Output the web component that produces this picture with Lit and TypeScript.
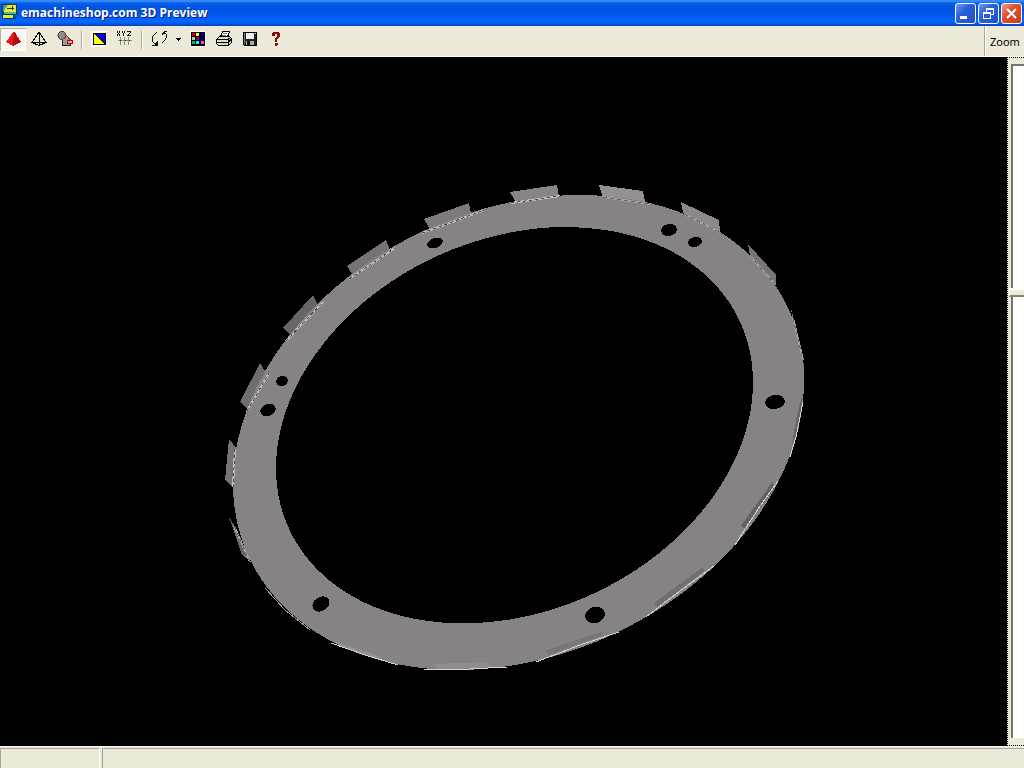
import { LitElement, html, svg, css } from "lit";
import { customElement, state } from "lit/decorators.js";

const px = (rows: string[], colors: Record<string, string>) =>
  svg`${rows.flatMap((row, y) =>
    [...row].map((c, x) =>
      colors[c] ? svg`<rect x=${x} y=${y} width="1" height="1" fill=${colors[c]}></rect>` : null
    )
  )}`;

const icon = (content: unknown) =>
  html`<svg class="icon" viewBox="0 0 16 16" aria-hidden="true">${content}</svg>`;

const icons = {
  solid: icon(svg`
    <path d="M9 0L1 11L8 15L16 11Z" fill="#b80808"/>
    <path d="M9 0L1 11L8 15Z" fill="#e81818"/>`),
  wire: icon(svg`
    <path d="M8 1L1 11.5L8 14.5L15 11.5Z M8 1V14.500 M1 11.5H15" fill="none" stroke="#000"/>`),
  parts: icon(svg`
    <circle cx="5" cy="4.500" r="4" fill="#8c8c8c" stroke="#444"/>
    <path d="M5.500 8.500H13.500V14.500H5.500Z" fill="#999" stroke="#222"/>
    <path d="M5 9L9.500 4.500L13 8.500" fill="#999" stroke="#555"/>
    <path d="M5 9L9.500 5.500" stroke="#d02020"/>
    <rect x="10.500" y="9.500" width="5" height="3" fill="#f0a0a0" stroke="#c00"/>`),
  contrast: icon(svg`
    <rect width="16" height="16" fill="#fff"/><rect x="2" y="2" width="13" height="12" fill="#000"/>
    <path d="M3 3V13H14Z" fill="#ffff20"/><path d="M4 3H14V13Z" fill="#0000d8"/>`),
  xyz: icon(px([
    "x.x..x.x..xxxx", "x.x..x.x.....x", ".x....x.....x.", "x.x...x....x..", "x.x...x...xxxx", "",
    "...g...g...g..", "...g...g...g..", "...g...g...g..", ".ggkggggkgggkgg", "...g...g...g..",
    "...g...g...g..", "...g...g...g..", "...g...g...g..",
  ], { x: "#111", g: "#8c8c84", k: "#222" })),
  rotate: icon(px([
    ".............xxx", ".....x......xx..", "....x......xxxx.", "...x.......x...x", "..x............x",
    ".x.............x", ".x.............x", ".x............x.", ".x............x.", ".x...........x..",
    ".x....x.....x...", "..x..xx....x....", "...xxxx.........", "....xxx.........", ".xxxxxx.........",
  ].map((r) => r.slice(0, 16)), { x: "#111" })),
  palette: icon(svg`
    <rect width="16" height="16" fill="#fff"/><rect x="1" y="1" width="14" height="14" fill="#000"/>
    ${["#d00000", "#ffff00", "#0000d0", "#c0c0c0", "#800080", "#000060", "#00c040", "#00ffff", "#ff30ff"].map(
      (c, i) => svg`<rect x=${2 + (i % 3) * 4 + (i % 3 > 1 ? 1 : 0)} y=${2 + Math.floor(i / 3) * 4} width="3" height="3" fill=${c}></rect>`
    )}`),
  print: icon(svg`
    <path d="M4.500 6L6.500 .5H13.500L11.500 6" fill="#fff" stroke="#000"/>
    <path d="M7 2.500H11 M6 4.500H10" stroke="#777"/>
    <path d="M3.500 5.500H13.500L15.500 7.500V11.500L12.500 14.500H2.500L.5 12.500V8.500Z" fill="#ddd9c8" stroke="#000"/>
    <path d="M1 8.500H12L15 6 M1 11.500H12L15 8.500 M12.500 9V14" fill="none" stroke="#000"/>
    <rect x="7" y="12" width="3" height="1" fill="#e0d020"/>`),
  save: icon(svg`
    <path d="M1.500 1.500H14.500V14.500H2.500L1.500 13.500Z" fill="#222" stroke="#000"/>
    <rect x="4" y="2" width="8" height="6" fill="#eee"/><rect x="2" y="2" width="1" height="11" fill="#777"/>
    <rect x="4" y="10" width="8" height="4" fill="#aaa"/><rect x="5" y="10" width="3" height="4" fill="#111"/>
    <rect x="13" y="2" width="1" height="1" fill="#fff"/>`),
  help: icon(px([
    "", ".....rrrrrr", "....rrrrrrrr", "....rrr..rrr", "....rrr..rrr", ".........rrr", "........rrr",
    ".......rrr", ".......rr", ".......rr", ".......rr", "", ".......rrr", ".......rrr", ".......rr",
  ], { r: "#850c0c" })),
};

const tabs: [string, string][] = [
  ["347,266 386,240 390,250 352,274", "#777276"],
  ["283,328 313,295 318,305 290,335", "#686568"],
  ["260,363 267,374 247,409 240,402", "#706d70"],
  ["229,439 237,449 233,488 225,480", "#777477"],
  ["229,517 237,530 250,561 242,555", "#686568"],
  ["424,219 469,203 471,213 430,229", "#7e7a7d"],
  ["510,192 557,185 559,197 516,202", "#8b8487"],
  ["599,185 643,191 645,202 603,197", "#968f93"],
  ["681,202 719,220 720,232 683,213", "#8e888c"],
  ["748,244 776,275 776,286 750,256", "#777377"],
  ["791,308 803,355 804,370 793,325", "#777377"],
];

const folds: [string, string][] = [
  ["803,392 799,428 792,444 797,415", "#696669"],
  ["773,481 774,489 744,529 741,526", "#656265"],
  ["703,567 704,571 657,607 654,603", "#716d71"],
  ["603,631 603,635 548,655 545,651", "#797578"],
  ["432,664 489,662 490,667 438,670", "#928b8f"],
  ["333,641 381,657 380,660 345,648", "#979094"],
];

const edges = [
  "803,402 796,437 790,457", "778,481 758,509 735,545", "714,566 680,591 646,617",
  "619,632 580,645 536,662", "507,667 470,669 424,669", "398,665 365,655 331,643",
];

const seams = [
  "349,279 395,248", "286,341 323,302", "247,411 269,373", "235,449 233,487",
  "422,233 482,211", "511,203 560,196",
];

const faintSeams = [
  "234,526 250,562", "603,197 650,204", "684,214 719,232", "750,256 775,284", "793,318 803,360",
];

const holes = [
  [435, 243, 8, 5, -20], [669, 230, 8, 6, -12], [695, 242, 7, 5, -12], [775, 402, 10, 7, -8],
  [595, 615, 10, 8, -15], [321, 604, 9, 7, -30], [268, 410, 8, 6, -25], [282, 381, 6, 5, -20],
];

@customElement("app-root")
export class AppRoot extends LitElement {
  static styles = css`
    :host {
      display: flex;
      flex-direction: column;
      height: 100vh;
      overflow: hidden;
      background: #ece9d8;
      color: #000;
      font: 11px/14px "Noto Sans", sans-serif;
    }
    svg { display: block; }
    button { margin: 0; padding: 0; border: 0; background: none; font: inherit; }
    .titlebar {
      flex: none;
      display: flex;
      align-items: center;
      height: 26px;
      padding: 0 2px;
      background: linear-gradient(#2b7ff5 0, #3a93ff 1px, #0a61e8 3px, #0054e0 7px, #0056e5 14px, #0566fc 20px, #0560f2 23px, #0040ba 26px);
    }
    .logo { width: 16px; height: 16px; margin: 0 3px 2px 0; }
    .title {
      flex: 1;
      margin: 0;
      color: #fff;
      font: bold 12px/18px "Open Sans", sans-serif;
      text-shadow: 1px 1px #0a1883;
      white-space: nowrap;
    }
    .controls { display: flex; gap: 2px; }
    .control {
      width: 21px;
      height: 21px;
      border: 1px solid #fff;
      border-radius: 3px;
      background: linear-gradient(135deg, #6f9cf5, #2a5fdc 40%, #2050c8);
    }
    .close { background: linear-gradient(135deg, #f0a080, #e05030 40%, #c83c18); }
    .toolbar {
      flex: none;
      display: flex;
      justify-content: space-between;
      box-sizing: border-box;
      height: 31px;
      border-bottom: 1px solid #fff;
    }
    .tools { display: flex; padding-top: 2px; height: 23px; }
    .tool { display: grid; place-items: center; width: 26px; height: 23px; }
    .pressed { background: #f8f6f0; box-shadow: inset 1px 1px #b4b1a4, inset -1px -1px #fff; }
    .drop { width: 13px; }
    .drop svg { width: 5px; height: 3px; }
    .icon { width: 16px; height: 16px; margin-bottom: 2px; shape-rendering: crispEdges; }
    .sep { width: 0; height: 18px; margin: 3px 3px 0; border-left: 1px solid #aca899; border-right: 1px solid #fff; }
    .zoomlabel {
      display: flex;
      align-items: center;
      padding: 2px 5px 0;
      width: 29px;
      border-left: 1px solid #aca899;
      box-shadow: inset 1px 0 #fff;
    }
    .main { flex: 1; min-height: 0; display: flex; background: #000; }
    .view { flex: 1; min-width: 0; }
    .view svg { width: 100%; height: 100%; }
    .zoom {
      flex: none;
      display: flex;
      width: 17px;
      box-sizing: border-box;
      padding: 6px 0 6px 1px;
      border: 1px dotted #000;
      border-right: 0;
      background: #ece9d8;
    }
    .slider {
      appearance: none;
      writing-mode: vertical-lr;
      width: 100%;
      height: 100%;
      margin: 0;
      outline: none;
      background:
        linear-gradient(#fff, #fff) 4px 2px / 100% calc(100% - 3px) no-repeat,
        linear-gradient(#77756a, #77756a) 2px 0 / 100% calc(100% - 1px) no-repeat;
    }
    .slider::-webkit-slider-thumb {
      appearance: none;
      box-sizing: border-box;
      width: 15px;
      height: 9px;
      background: #ece9d8;
      border: solid;
      border-width: 2px 0 2px 1px;
      border-color: #fff #fff #85826f #fff;
    }
    .status { flex: none; display: flex; gap: 2px; height: 20px; padding-top: 2px; box-shadow: inset 0 1px #f5f3ea; }
    .cell { border-top: 1px solid #aca899; border-left: 1px solid #aca899; }
    .cell:first-child { width: 98px; border-right: 1px solid #fff; }
    .cell:last-child { flex: 1; }
  `;

  @state() private zoom = 337;

  render() {
    return html`
      <header class="titlebar">
        <svg class="logo" viewBox="0 0 16 16" shape-rendering="crispEdges">
          <path d="M0 0H14V8H0Z" fill="#e9e92a" /><path d="M0 0H6L1 9H0Z" fill="#28a8a0" />
          <path d="M0 8H16V11H12V13H14V15H2V12H0Z" fill="#083c50" />
          <path d="M2 8H14V10H2Z" fill="#40c0a8" /><path d="M1 11H11V14H1Z" fill="#e9e92a" />
          <path d="M5 4.500H12 M10.500 2V6 M0 .5H14.500V8 M.5 0V15" stroke="#234" fill="none" />
        </svg>
        <h1 class="title">emachineshop.com 3D Preview</h1>
        <div class="controls">
          <button class="control" aria-label="Minimize">
            <svg viewBox="0 0 19 19"><path d="M4 12H11V15H4Z" fill="#fff" /></svg>
          </button>
          <button class="control" aria-label="Restore">
            <svg viewBox="0 0 19 19" shape-rendering="crispEdges" fill="none" stroke="#fff">
              <path d="M7.500 8V4.500H14.500V10.500H12 M7 5.500H15 M4.500 8.500H11.500V14.500H4.500Z M4 9.500H12" />
            </svg>
          </button>
          <button class="control close" aria-label="Close">
            <svg viewBox="0 0 19 19"><path d="M5 5L14 14M14 5L5 14" stroke="#fff" stroke-width="2" /></svg>
          </button>
        </div>
      </header>
      <div class="toolbar">
        <div class="tools" role="toolbar">
          <button class="tool pressed" aria-label="Solid">${icons.solid}</button>
          <button class="tool" aria-label="Wireframe">${icons.wire}</button>
          <button class="tool" aria-label="Parts">${icons.parts}</button>
          <span class="sep"></span>
          <button class="tool" aria-label="Background">${icons.contrast}</button>
          <button class="tool" aria-label="Axes">${icons.xyz}</button>
          <span class="sep"></span>
          <button class="tool" aria-label="Rotate">${icons.rotate}</button>
          <button class="tool drop" aria-label="Rotate options">
            <svg viewBox="0 0 5 3" shape-rendering="crispEdges"><path d="M0 0H5V1H4V2H3V3H2V2H1V1H0Z" /></svg>
          </button>
          <button class="tool" aria-label="Colors">${icons.palette}</button>
          <button class="tool" aria-label="Print">${icons.print}</button>
          <button class="tool" aria-label="Save">${icons.save}</button>
          <button class="tool" aria-label="Help">${icons.help}</button>
        </div>
        <label class="zoomlabel" for="zoom">Zoom</label>
      </div>
      <main class="main">
        <div class="view">
          <svg viewBox="0 57 1007 689" shape-rendering="crispEdges" role="img" aria-label="Ring part">
            ${tabs.map(([p, c]) => svg`<polygon points=${p} fill=${c}></polygon>`)}
            <circle r="1" transform="matrix(285.5 -51.2 0 231.9 518.5 432.5)" fill="#878283" />
            ${folds.map(([p, c]) => svg`<polygon points=${p} fill=${c}></polygon>`)}
            ${edges.map((p) => svg`<polyline points=${p} fill="none" stroke="#d4d2d2"></polyline>`)}
            <polyline points="265,588 285,610 310,630" fill="none" stroke="#a19b9e" />
            ${seams.map((p) => svg`
              <polyline points=${p} stroke="#bdb9bb" stroke-width="2"></polyline>
              <polyline points=${p} stroke="#4c494b" stroke-dasharray="3 3"></polyline>`)}
            ${faintSeams.map((p) => svg`
              <polyline points=${p} stroke="#a5a0a2" stroke-width="2"></polyline>
              <polyline points=${p} stroke="#6a6668" stroke-dasharray="4 3"></polyline>`)}
            <circle r="1" transform="matrix(238.5 -42.8 0 193.5 514.5 425.2)" fill="#000" />
            ${holes.map(([x, y, rx, ry, a]) =>
              svg`<ellipse rx=${rx} ry=${ry} transform="translate(${x} ${y}) rotate(${a})" fill="#000"></ellipse>`)}
          </svg>
        </div>
        <div class="zoom">
          <input id="zoom" class="slider" type="range" min="0" max="1000" .value=${String(this.zoom)}
            @input=${(e: Event) => (this.zoom = Number((e.target as HTMLInputElement).value))} />
        </div>
      </main>
      <footer class="status"><div class="cell"></div><div class="cell"></div></footer>
    `;
  }
}
